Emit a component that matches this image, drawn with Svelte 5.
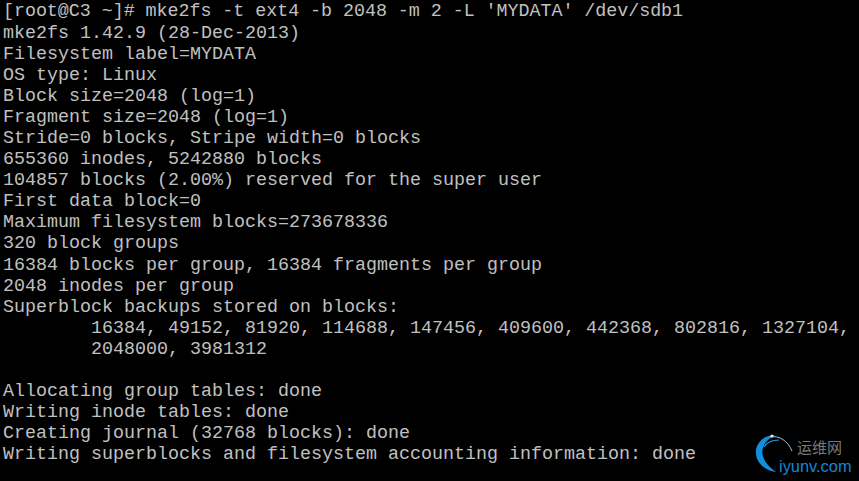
<script>
  const lines = [
    "mke2fs 1.42.9 (28-Dec-2013)",
    "Filesystem label=MYDATA",
    "OS type: Linux",
    "Block size=2048 (log=1)",
    "Fragment size=2048 (log=1)",
    "Stride=0 blocks, Stripe width=0 blocks",
    "655360 inodes, 5242880 blocks",
    "104857 blocks (2.00%) reserved for the super user",
    "First data block=0",
    "Maximum filesystem blocks=273678336",
    "320 block groups",
    "16384 blocks per group, 16384 fragments per group",
    "2048 inodes per group",
    "Superblock backups stored on blocks:",
    "        16384, 49152, 81920, 114688, 147456, 409600, 442368, 802816, 1327104,",
    "        2048000, 3981312",
    "",
    "Allocating group tables: done",
    "Writing inode tables: done",
    "Creating journal (32768 blocks): done",
    "Writing superblocks and filesystem accounting information: done"
  ];
</script>

<div class="term">
  <div class="line first">[root@C3 ~]# mke2fs -t ext4 -b 2048 -m 2 -L 'MYDATA' /dev/sdb1</div>
  {#each lines as l}
    <div class="line">{l}</div>
  {/each}
  <div class="mark">
    <svg class="arc" width="42" height="44" viewBox="0 0 42 44" aria-hidden="true">
      <path d="M20 3C8 3 0 12 1 22C2 32 11 39 21 40C14 35 8.500 29 7.500 22C6.500 14 12 7 20 3Z" fill="#0f8fe0"/>
      <path d="M9 15C12 10 17 8 24 8" fill="none" stroke="#1c9be6" stroke-width="1.2"/>
      <path d="M15 5C24 3 33 9 37 19" fill="none" stroke="#9fc6df" stroke-width="1"/>
      <circle cx="17" cy="4" r="1.6" fill="#cfeaff"/>
    </svg>
    <div class="cn">运维网</div>
    <div class="en">iyunv.com</div>
  </div>
</div>

<style>
  :global(body) { margin: 0; background: #000; }
  .term {
    position: relative;
    width: 859px;
    height: 481px;
    overflow: hidden;
    background: #000;
    color: #c0c0c0;
    font-family: "Liberation Mono", monospace;
    font-size: 18.33px;
    line-height: 21px;
    padding: 1px 0 0 3px;
    box-sizing: border-box;
  }
  .line { white-space: pre; height: 21.05px; }
  .first { height: 22px; letter-spacing: -0.03px; }
  .mark { position: absolute; left: 755px; top: 432px; width: 104px; height: 46px; }
  .arc { position: absolute; left: 0; top: 0; }
  .cn {
    position: absolute; left: 42px; top: 6px;
    font: 15px/18px "Noto Sans CJK SC", sans-serif;
    color: #7a7a7a;
  }
  .en {
    position: absolute; left: 24px; top: 25px;
    font: 16.4px/18px "Liberation Sans", sans-serif;
    color: #1487d6;
  }
</style>
